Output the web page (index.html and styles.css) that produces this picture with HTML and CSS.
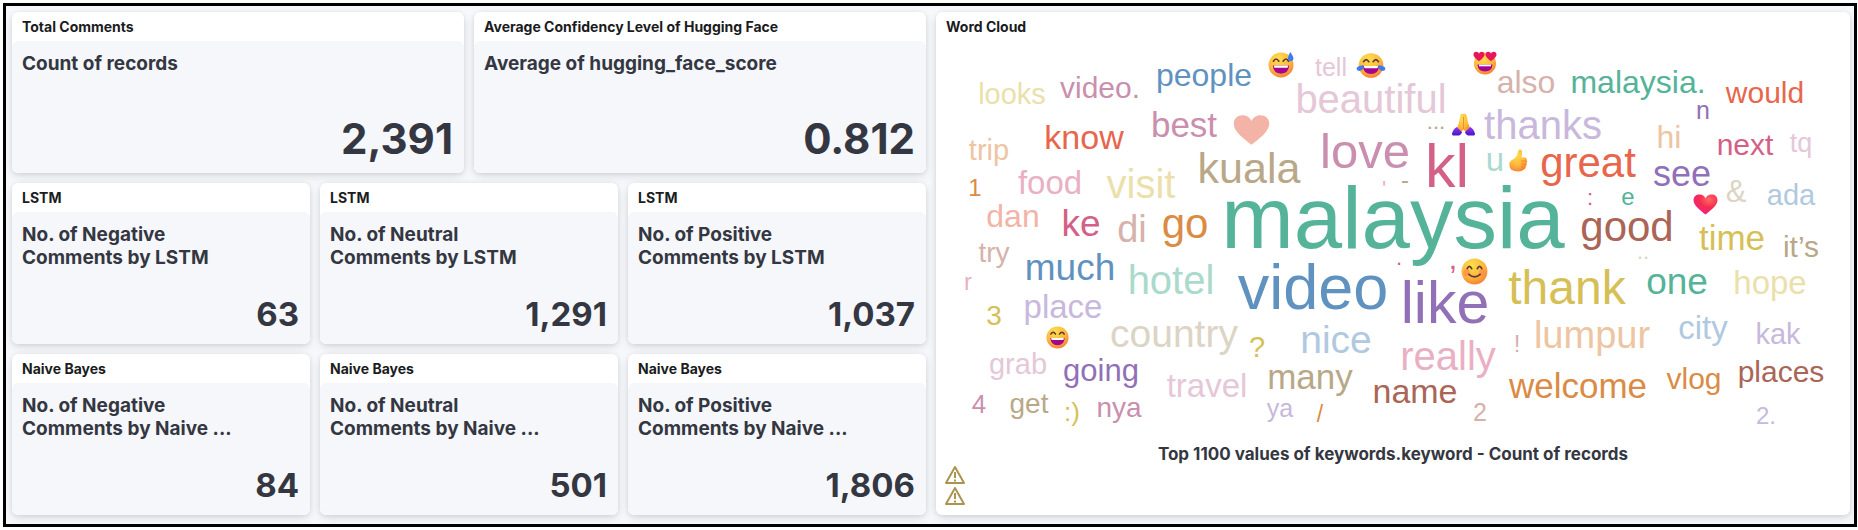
FILE: index.html
```html
<!DOCTYPE html>
<html lang="en">
<head>
<meta charset="utf-8">
<title>Comments dashboard</title>
<link rel="stylesheet" href="styles.css">
</head>
<body>
<main class="dashboard">
  <div class="metrics">
    <section class="panel half">
      <h2 class="panel-title">Total Comments</h2>
      <div class="metric large"><h3 class="metric-label">Count of records</h3><p class="metric-value">2,391</p></div>
    </section>
    <section class="panel half">
      <h2 class="panel-title">Average Confidency Level of Hugging Face</h2>
      <div class="metric large"><h3 class="metric-label">Average of hugging_face_score</h3><p class="metric-value">0.812</p></div>
    </section>
    <section class="panel third">
      <h2 class="panel-title">LSTM</h2>
      <div class="metric"><h3 class="metric-label">No. of Negative<br>Comments by LSTM</h3><p class="metric-value">63</p></div>
    </section>
    <section class="panel third">
      <h2 class="panel-title">LSTM</h2>
      <div class="metric"><h3 class="metric-label">No. of Neutral<br>Comments by LSTM</h3><p class="metric-value">1,291</p></div>
    </section>
    <section class="panel third">
      <h2 class="panel-title">LSTM</h2>
      <div class="metric"><h3 class="metric-label">No. of Positive<br>Comments by LSTM</h3><p class="metric-value">1,037</p></div>
    </section>
    <section class="panel third">
      <h2 class="panel-title">Naive Bayes</h2>
      <div class="metric"><h3 class="metric-label">No. of Negative<br>Comments by Naive ...</h3><p class="metric-value">84</p></div>
    </section>
    <section class="panel third">
      <h2 class="panel-title">Naive Bayes</h2>
      <div class="metric"><h3 class="metric-label">No. of Neutral<br>Comments by Naive ...</h3><p class="metric-value">501</p></div>
    </section>
    <section class="panel third">
      <h2 class="panel-title">Naive Bayes</h2>
      <div class="metric"><h3 class="metric-label">No. of Positive<br>Comments by Naive ...</h3><p class="metric-value">1,806</p></div>
    </section>
  </div>

  <section class="panel">
    <h2 class="panel-title">Word Cloud</h2>
    <svg class="cloud" viewBox="936 41 914 401">
      <defs>
        <radialGradient id="skin" cx="0.4" cy="0.25" r="0.8">
          <stop offset="0" stop-color="#ffdf4d"/><stop offset="0.6" stop-color="#ffb63c"/><stop offset="1" stop-color="#f47b35"/>
        </radialGradient>
        <radialGradient id="heart-red" cx="0.65" cy="0.25" r="0.8">
          <stop offset="0" stop-color="#ff6a66"/><stop offset="0.5" stop-color="#f52c50"/><stop offset="1" stop-color="#f41d8c"/>
        </radialGradient>
        <linearGradient id="sleeve" x1="0" y1="0" x2="0" y2="1">
          <stop offset="0" stop-color="#8a3ff2"/><stop offset="1" stop-color="#4a12c8"/>
        </linearGradient>
        <path id="heart" d="M12 21.500C7 17.500 0.500 12.500 0.500 7.300C0.500 3.500 3 1.500 6.300 1.500C9 1.500 11 3 12 5.500C13 3 15 1.500 17.700 1.500C21 1.500 23.500 3.500 23.500 7.300C23.500 12.500 17 17.500 12 21.500Z"/>
        <g id="laugh">
          <circle cx="12" cy="12" r="11.500" fill="url(#skin)"/>
          <path d="M5 8.500Q7.500 4.500 10 8.500M14 8.500Q16.500 4.500 19 8.500" fill="none" stroke="#5b3a3a" stroke-width="1.500" stroke-linecap="round"/>
          <path d="M4.500 12.500H19.500Q19 20 12 20Q5 20 4.500 12.500Z" fill="#a3058e"/>
          <path d="M5.500 12.500H18.500V13.500Q18.500 14.500 17.500 14.500H6.500Q5.500 14.500 5.500 13.500Z" fill="#fff"/>
        </g>
      </defs>

      <g class="words">
        <g fill="#54b399">
          <text x="1393" y="248" font-size="87">malaysia</text>
          <text x="1638" y="93" font-size="32">malaysia.</text>
          <text x="1677" y="294" font-size="37">one</text>
          <text x="1628" y="205" font-size="24">e</text>
        </g>
        <g fill="#6092c0">
          <text x="1313" y="309" font-size="63">video</text>
          <text x="1204" y="86" font-size="32">people</text>
          <text x="1070" y="280" font-size="37">much</text>
        </g>
        <g fill="#d36086">
          <text x="1447" y="187" font-size="61">kl</text>
          <text x="1081" y="236" font-size="37">ke</text>
          <text x="1745" y="155" font-size="30">next</text>
          <text x="1590" y="205" font-size="22">:</text>
          <text x="1453" y="269" font-size="30">,</text>
          <text x="1399" y="265" font-size="22">.</text>
        </g>
        <g fill="#9170b8">
          <text x="1445" y="323" font-size="59">like</text>
          <text x="1682" y="186" font-size="36">see</text>
          <text x="1101" y="381" font-size="31">going</text>
          <text x="1703" y="119" font-size="25">n</text>
        </g>
        <g fill="#ca8eae">
          <text x="1365" y="168" font-size="49">love</text>
          <text x="1184" y="137" font-size="35">best</text>
          <text x="1100" y="98" font-size="30">video.</text>
          <text x="1119" y="417" font-size="28">nya</text>
          <text x="979" y="413" font-size="26">4</text>
        </g>
        <g fill="#d6bf57">
          <text x="1567" y="304" font-size="48">thank</text>
          <text x="1732" y="250" font-size="35">time</text>
          <text x="994" y="325" font-size="28">3</text>
          <text x="1257" y="357" font-size="29">?</text>
          <text x="1072" y="421" font-size="26">:)</text>
        </g>
        <g fill="#b9a888">
          <text x="1249" y="183" font-size="43">kuala</text>
          <text x="1310" y="389" font-size="35">many</text>
          <text x="1801" y="257" font-size="30">it’s</text>
          <text x="1029" y="413" font-size="28">get</text>
          <text x="1436" y="129" font-size="22">...</text>
          <text x="1405" y="188" font-size="24">-</text>
        </g>
        <g fill="#da8b45">
          <text x="1185" y="238" font-size="42">go</text>
          <text x="1578" y="398" font-size="35">welcome</text>
          <text x="1694" y="389" font-size="30">vlog</text>
          <text x="975" y="196" font-size="24">1</text>
          <text x="1320" y="422" font-size="23">/</text>
        </g>
        <g fill="#aa6556">
          <text x="1627" y="241" font-size="42">good</text>
          <text x="1415" y="403" font-size="34">name</text>
          <text x="1781" y="382" font-size="30">places</text>
        </g>
        <g fill="#e7664c">
          <text x="1588" y="177" font-size="42">great</text>
          <text x="1084" y="149" font-size="34">know</text>
          <text x="1765" y="103" font-size="30">would</text>
        </g>
        <g fill="#aadacc">
          <text x="1171" y="294" font-size="40">hotel</text>
          <text x="1495" y="171" font-size="33">u</text>
        </g>
        <g fill="#b0c9e0">
          <text x="1336" y="353" font-size="39">nice</text>
          <text x="1703" y="339" font-size="33">city</text>
          <text x="1791" y="205" font-size="29">ada</text>
        </g>
        <g fill="#e9b0c3">
          <text x="1448" y="370" font-size="40">really</text>
          <text x="1050" y="194" font-size="33">food</text>
          <text x="968" y="290" font-size="24">r</text>
          <text x="1384" y="196" font-size="22">'</text>
        </g>
        <g fill="#c8b8dc">
          <text x="1543" y="139" font-size="40">thanks</text>
          <text x="1063" y="318" font-size="33">place</text>
          <text x="1778" y="344" font-size="29">kak</text>
          <text x="1280" y="417" font-size="25">ya</text>
          <text x="1766" y="424" font-size="24">2.</text>
        </g>
        <g fill="#e5c7d7">
          <text x="1371" y="113" font-size="40">beautiful</text>
          <text x="1331" y="76" font-size="25">tell</text>
          <text x="1207" y="397" font-size="33">travel</text>
          <text x="1018" y="374" font-size="29">grab</text>
          <text x="1801" y="152" font-size="27">tq</text>
        </g>
        <g fill="#ebdfab">
          <text x="1141" y="198" font-size="40">visit</text>
          <text x="1012" y="104" font-size="29">looks</text>
          <text x="1770" y="294" font-size="33">hope</text>
        </g>
        <g fill="#dcd4c4">
          <text x="1174" y="347" font-size="39">country</text>
          <text x="1736" y="202" font-size="31">&amp;</text>
          <text x="1643" y="259" font-size="22">..</text>
        </g>
        <g fill="#edc5a2">
          <text x="1592" y="348" font-size="38">lumpur</text>
          <text x="989" y="160" font-size="29">trip</text>
          <text x="1669" y="148" font-size="32">hi</text>
        </g>
        <g fill="#d5b2ab">
          <text x="1132" y="242" font-size="38">di</text>
          <text x="1526" y="93" font-size="32">also</text>
          <text x="994" y="262" font-size="28">try</text>
          <text x="1480" y="421" font-size="25">2</text>
          <text x="1517" y="352" font-size="24">!</text>
        </g>
        <g fill="#f3b3a6">
          <text x="1013" y="227" font-size="32">dan</text>
        </g>
      </g>

      <!-- plain heart -->
      <svg x="1233" y="113" width="37" height="34" viewBox="0 0 24 23" preserveAspectRatio="none"><use href="#heart" fill="#f3b3a6"/></svg>
      <!-- red heart -->
      <svg x="1693" y="193" width="25" height="23" viewBox="0 0 24 23" preserveAspectRatio="none"><use href="#heart" fill="url(#heart-red)"/></svg>
      <!-- grinning face -->
      <svg x="1046" y="326" width="23" height="23" viewBox="0 0 24 24"><use href="#laugh"/></svg>
      <!-- grinning face with sweat -->
      <svg x="1268" y="52" width="26" height="26" viewBox="0 0 24 24"><use href="#laugh"/><path d="M20.500 0Q23.800 4.500 23.500 6.500Q23 8.500 20.800 8.500Q18.500 8.500 18.300 6.500Q18.200 4.500 20.500 0Z" fill="#3c7bf0"/></svg>
      <!-- face with tears of joy -->
      <svg x="1356" y="52" width="30" height="27" viewBox="-2 0 28 24"><use href="#laugh"/><path d="M5 11.500Q5.500 16 2 17Q-1 17.300 -1.500 15Q-1.500 12.500 5 11.500ZM19 11.500Q18.500 16 22 17Q25 17.300 25.500 15Q25.500 12.500 19 11.500Z" fill="#3c7bf0"/></svg>
      <!-- heart eyes -->
      <svg x="1473" y="51" width="24" height="24" viewBox="0 0 24 24">
        <circle cx="12" cy="12.500" r="11" fill="url(#skin)"/>
        <path d="M4.500 13.500H19.500Q19 20.500 12 20.500Q5 20.500 4.500 13.500Z" fill="#a3058e"/><path d="M6 13.500H18V15.300H6Z" fill="#fff"/>
        <svg x="0" y="0" width="12" height="11" viewBox="0 0 24 23"><use href="#heart" fill="#e8155b"/></svg>
        <svg x="12" y="0" width="12" height="11" viewBox="0 0 24 23"><use href="#heart" fill="#e8155b"/></svg>
      </svg>
      <!-- smiling face -->
      <svg x="1461" y="258" width="27" height="27" viewBox="0 0 24 24">
        <circle cx="12" cy="12" r="11.500" fill="url(#skin)"/>
        <circle cx="5" cy="13" r="3" fill="#ff8050" opacity="0.600"/><circle cx="19" cy="13" r="3" fill="#ff8050" opacity="0.600"/>
        <path d="M5.500 9.500Q7.500 5.500 9.500 9.500M14.500 9.500Q16.500 5.500 18.500 9.500M7 14.500Q12 19 17 14.500" fill="none" stroke="#5b3a3a" stroke-width="1.500" stroke-linecap="round"/>
      </svg>
      <!-- folded hands -->
      <svg x="1452" y="113" width="23" height="23" viewBox="0 0 24 24">
        <path d="M11.700 1Q9.500 0 8.800 2.500L7 11L5 16L9 21L12 17L15 21L19 16L17 11L15.200 2.500Q14.500 0 12.300 1Z" fill="url(#skin)"/>
        <path d="M12 4V17" stroke="#ee8d2c" stroke-width="1"/>
        <path d="M5 14.500L10.500 20Q9 24 5 23.500H1Q0 23.500 0 21.500Q1 17 5 14.500ZM19 14.500L13.500 20Q15 24 19 23.500H23Q24 23.500 24 21.500Q23 17 19 14.500Z" fill="url(#sleeve)"/>
      </svg>
      <!-- thumbs up -->
      <svg x="1509" y="149" width="19" height="23" viewBox="0 0 19 23">
        <path d="M10.500 0.500Q13.500 0 13 4.500L12.500 8.500H16Q18 8.800 17.700 11Q18.800 12.500 17.500 14.200Q18.200 16 16.700 17.500Q17 19.500 15 20.500Q13 22.500 9 22.500Q5 22.500 2 20.500Q0 18 0.500 13.500Q2 11 5.500 9.500Q9 6 9 2.500Q9.200 1 10.500 0.500Z" fill="url(#skin)"/>
        <path d="M12 12H17M12 15H17M12 18H16" stroke="#ef8530" stroke-width="1"/>
      </svg>
    </svg>
    <p class="caption">Top 1100 values of keywords.keyword - Count of records</p>
    <div class="warnings">
      <svg class="warning" viewBox="0 0 20 18"><path d="M10 1L19 17H1Z"/><path d="M10 6V12M10 13.500V15.500"/></svg>
      <svg class="warning" viewBox="0 0 20 18"><path d="M10 1L19 17H1Z"/><path d="M10 6V12M10 13.500V15.500"/></svg>
    </div>
  </section>
</main>
</body>
</html>
```

FILE: styles.css
```css
* {
  box-sizing: border-box;
}

body {
  margin: 0;
  padding: 3px 1px 3px 3px;
  background: #fff;
  color: #343741;
  font-family: Inter, "Liberation Sans", sans-serif;
}

h2,
h3,
p {
  margin: 0;
}

.dashboard {
  display: grid;
  grid-template-columns: 1fr 1fr;
  gap: 10px;
  padding: 6px 4px 9px 6px;
  border: 3px solid #000;
  background: #f7f8fc;
}

.metrics {
  display: grid;
  grid-template-columns: repeat(6, 1fr);
  grid-auto-rows: 1fr;
  gap: 10px;
}

.half {
  grid-column: span 3;
}

.third {
  grid-column: span 2;
}

.panel {
  display: flex;
  flex-direction: column;
  min-width: 0;
  border-radius: 6px;
  background: #fff;
  box-shadow: 0 1px 4px rgba(0, 0, 0, 0.08), 0 2px 8px rgba(0, 0, 0, 0.06), 0 5px 12px rgba(0, 0, 0, 0.05);
}

.panel-title {
  padding: 0 10px;
  color: #1a1c21;
  font-size: 14px;
  font-weight: 700;
  line-height: 29px;
}

.metric {
  display: flex;
  flex: 1;
  flex-direction: column;
  justify-content: space-between;
  padding: 11px 11px 13px 10px;
  border-radius: 6px;
  background: #f5f7fb;
}

.metric-label {
  font-size: 19px;
  font-weight: 700;
  line-height: 23px;
}

.metric-value {
  font-size: 33px;
  font-weight: 700;
  line-height: 33px;
  text-align: right;
}

.large .metric-value {
  font-size: 42px;
  line-height: 42px;
}

.cloud {
  display: block;
  width: 100%;
  height: auto;
}

.words {
  font-family: "Liberation Sans", Arial, sans-serif;
  text-anchor: middle;
}

.caption {
  font-size: 17px;
  font-weight: 700;
  line-height: 24px;
  text-align: center;
}

.warnings {
  display: flex;
  flex-direction: column;
  gap: 3px;
  padding: 0 9px 10px;
}

.warning {
  width: 20px;
  height: 18px;
  fill: none;
  stroke: #ab9452;
  stroke-width: 2;
  stroke-linejoin: round;
}
```
